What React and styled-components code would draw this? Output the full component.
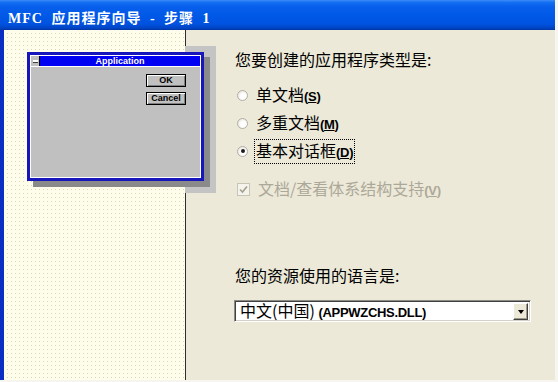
import React from "react";
import styled, { createGlobalStyle } from "styled-components";

const GlobalStyle = createGlobalStyle`
  html, body {
    margin: 0;
    padding: 0;
    background: #f6f5ef;
    overflow: hidden;
  }
`;

const cjk = `"Noto Sans CJK SC", "Liberation Sans", sans-serif`;

const Window = styled.div`
  width: 555px;
  height: 380px;
  display: flex;
  flex-direction: column;
`;

const TitleBar = styled.div`
  height: 30px;
  flex-shrink: 0;
  display: flex;
  align-items: center;
  padding: 3px 0 0 8px;
  box-sizing: border-box;
  background: linear-gradient(
    to bottom,
    #3d8cf6 0%,
    #1470f2 8%,
    #075fec 22%,
    #0058e6 55%,
    #0052e0 80%,
    #0044c4 94%,
    #00339e 100%
  );
`;

const TitleText = styled.span`
  font-family: "Liberation Serif", "Noto Sans CJK SC", serif;
  font-weight: bold;
  font-size: 14px;
  letter-spacing: 1px;
  word-spacing: 4px;
  color: #fff;
  white-space: pre;
`;

const Body = styled.div`
  flex: 1;
  display: flex;
  position: relative;
  border-left: 4px solid #0a37d4;
  border-image: linear-gradient(to right, #0a2ec4 0, #0a2ec4 2px, #2a6ef0 2px) 1;
`;

const LeftPanel = styled.div`
  width: 181px;
  flex-shrink: 0;
  border-right: 1px solid #2e2e2e;
  background:
    linear-gradient(90deg, #fefdeb 3px, transparent 3px) 0 0 / 4px 4px,
    linear-gradient(#fefdeb 3px, #dcd8b4 3px) 0 0 / 4px 4px;
`;

const RightPanel = styled.div`
  flex: 1;
  background: #ece9d8;
  padding: 19px 0 0 49px;
  display: flex;
  flex-direction: column;
  font-family: ${cjk};
  font-size: 16px;
  color: #000;
`;

const Heading = styled.div`
  line-height: 20px;
  margin-top: ${(p) => p.$gap || 0}px;
`;

const OptionList = styled.div`
  margin-top: 12px;
  display: flex;
  flex-direction: column;
`;

const Row = styled.div`
  height: 28px;
  display: flex;
  align-items: center;
  margin-top: ${(p) => p.$gap || 0}px;
  color: ${(p) => (p.$disabled ? "#aca899" : "#000")};
`;

const Radio = styled.span`
  width: 11px;
  height: 11px;
  margin-left: 2px;
  margin-right: 6px;
  box-sizing: border-box;
  border-radius: 50%;
  border: 1px solid #b2b0a6;
  background: radial-gradient(circle at 60% 60%, #ffffff 35%, #dcdad0 100%);
  display: flex;
  align-items: center;
  justify-content: center;

  &::after {
    content: "";
    width: 4px;
    height: 4px;
    border-radius: 50%;
    background: ${(p) => (p.$checked ? "#1c1c1c" : "transparent")};
  }
`;

const Label = styled.span`
  line-height: 20px;
  padding: 0 1px;
  border: 1px dotted ${(p) => (p.$focus ? "#000" : "transparent")};
  white-space: pre;
`;

const Key = styled.span`
  font-family: "Liberation Sans", sans-serif;
  font-weight: bold;
  font-size: 13px;
  letter-spacing: -0.3px;

  u {
    text-decoration: underline;
  }
`;

const CheckBox = styled.span`
  width: 13px;
  height: 13px;
  margin-left: 2px;
  margin-right: 6px;
  box-sizing: border-box;
  border: 1px solid #c8c5b6;
  background: #f4f3ec;
  display: flex;
  align-items: center;
  justify-content: center;
`;

const Combo = styled.div`
  margin: 15px 0 0 -1px;
  width: 297px;
  height: 22px;
  box-sizing: border-box;
  display: flex;
  align-items: center;
  background: #fff;
  border-top: 1px solid #8a8a84;
  border-left: 1px solid #8a8a84;
  border-bottom: 1px solid #fff;
  border-right: 1px solid #fff;
  box-shadow: inset 1px 1px #404040, inset -1px -1px #d4d0c8;
`;

const ComboText = styled.span`
  flex: 1;
  padding-left: 5px;
  line-height: 20px;
  white-space: pre;
`;

const DropButton = styled.span`
  width: 15px;
  height: 17px;
  margin-right: 2px;
  box-sizing: border-box;
  background: #ece9d8;
  border-top: 1px solid #fff;
  border-left: 1px solid #fff;
  border-right: 1px solid #404040;
  border-bottom: 1px solid #404040;
  box-shadow: inset -1px -1px #9d9a8c;
  display: flex;
  align-items: center;
  justify-content: center;

  &::after {
    content: "";
    border-left: 3px solid transparent;
    border-right: 3px solid transparent;
    border-top: 4px solid #000;
    margin-top: 1px;
  }
`;

/* left-hand picture: a little Windows 3.1 style dialog with its shadows */
const Shade = styled.div`
  position: absolute;
  left: ${(p) => p.$x}px;
  top: ${(p) => p.$y}px;
  width: ${(p) => p.$w}px;
  height: ${(p) => p.$h}px;
  background: ${(p) => p.$color};
`;

const MiniDialog = styled.div`
  position: absolute;
  left: 23px;
  top: 22px;
  width: 177px;
  height: 129px;
  box-sizing: border-box;
  border: 3px solid #1616bc;
  padding: 1px;
  background: #fff;
  display: flex;
  flex-direction: column;
  gap: 1px;
`;

const MiniTitle = styled.div`
  height: 10px;
  flex-shrink: 0;
  display: flex;
  background: #0000f2;
`;

const SysBox = styled.span`
  width: 8px;
  background: #c0c0c0;
  border-right: 1px solid #000;
  display: flex;
  align-items: center;
  justify-content: center;

  &::after {
    content: "";
    width: 5px;
    height: 2px;
    background: #fff;
    box-shadow: 0 1px #404040;
  }
`;

const MiniTitleText = styled.span`
  flex: 1;
  text-align: center;
  font-family: "Liberation Sans", sans-serif;
  font-weight: bold;
  font-size: 9px;
  line-height: 10px;
  color: #fff;
`;

const MiniClient = styled.div`
  flex: 1;
  background: #c0c0c0;
  display: flex;
  flex-direction: column;
  align-items: flex-end;
  gap: 5px;
  padding: 7px 14px 0 0;
`;

const MiniButton = styled.div`
  width: 40px;
  height: 13px;
  box-sizing: border-box;
  border: 1px solid #000;
  background: #c0c0c0;
  box-shadow: inset 1px 1px #fff, inset -1px -1px #808080;
  font-family: "Liberation Sans", sans-serif;
  font-weight: bold;
  font-size: 9px;
  line-height: 11px;
  text-align: center;
  color: #000;
`;

const options = [
  { text: "单文档", key: "S" },
  { text: "多重文档", key: "M" },
  { text: "基本对话框", key: "D", checked: true },
];

export default function App() {
  return (
    <>
      <GlobalStyle />
      <Window>
        <TitleBar>
          <TitleText>MFC 应用程序向导 - 步骤 1</TitleText>
        </TitleBar>
        <Body>
          <LeftPanel />
          <RightPanel>
            <Heading>您要创建的应用程序类型是:</Heading>
            <OptionList>
              {options.map((o) => (
                <Row key={o.key}>
                  <Radio $checked={o.checked} />
                  <Label $focus={o.checked}>
                    {o.text}
                    <Key>
                      (<u>{o.key}</u>)
                    </Key>
                  </Label>
                </Row>
              ))}
            </OptionList>
            <Row $gap={10} $disabled>
              <CheckBox>
                <svg width="9" height="9" viewBox="0 0 9 9">
                  <polyline
                    points="1,4.5 3.5,7 8,1.5"
                    fill="none"
                    stroke="#a3a090"
                    strokeWidth="1.6"
                  />
                </svg>
              </CheckBox>
              <Label>
                文档/查看体系结构支持
                <Key>
                  (<u>V</u>)
                </Key>
              </Label>
            </Row>
            <Heading $gap={62}>您的资源使用的语言是:</Heading>
            <Combo>
              <ComboText>
                中文(中国) <Key>(APPWZCHS.DLL)</Key>
              </ComboText>
              <DropButton />
            </Combo>
          </RightPanel>

          <Shade $x={181} $y={16} $w={31} $h={147} $color="#c4c4c4" />
          <Shade $x={29} $y={27} $w={177} $h={130} $color="#8a8a8a" />
          <MiniDialog>
            <MiniTitle>
              <SysBox />
              <MiniTitleText>Application</MiniTitleText>
            </MiniTitle>
            <MiniClient>
              <MiniButton>OK</MiniButton>
              <MiniButton>Cancel</MiniButton>
            </MiniClient>
          </MiniDialog>
        </Body>
      </Window>
    </>
  );
}
